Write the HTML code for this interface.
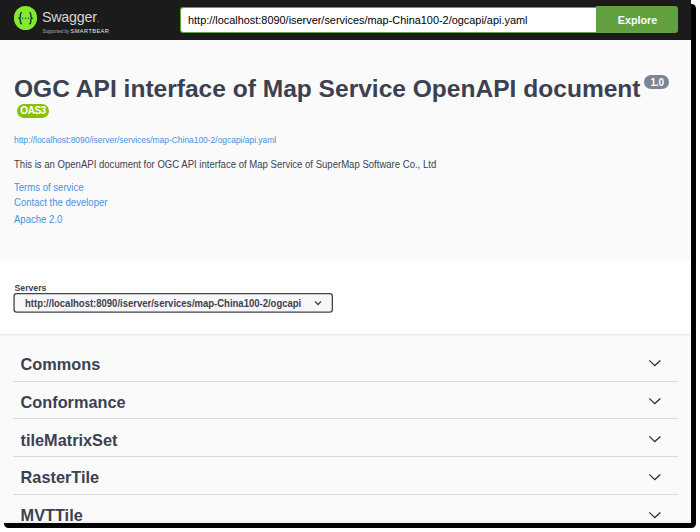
<!DOCTYPE html>
<html><head><meta charset="utf-8">
<style>
html,body{margin:0;padding:0;}
body{width:700px;height:532px;overflow:hidden;background:#fff;position:relative;font-family:"Liberation Sans",sans-serif;}
.shadow{position:absolute;left:4px;top:4px;width:692px;height:524px;background:#000;border-radius:4.5px;}
.page{position:absolute;left:0;top:0;width:691px;height:523px;background:#fafafa;overflow:hidden;}
.abs{position:absolute;white-space:nowrap;line-height:1;}
.topbar{position:absolute;left:0;top:0;width:691px;height:40px;background:#1b1b1b;}
.logo{position:absolute;left:13.9px;top:6.2px;width:23.6px;height:23.6px;border-radius:50%;background:#85ea2d;}
.sw{color:#d6d6d6;font-size:14.3px;left:42px;top:10.2px;letter-spacing:-0.25px;}
.sup{color:#b0b0b0;font-size:4.5px;left:42.5px;top:28.5px;}
.sup b{color:#e8e8e8;font-weight:normal;font-size:5.6px;letter-spacing:0.45px;}
.input{position:absolute;left:180px;top:6.5px;width:415px;height:24px;border:1px solid #62a03f;border-right:none;border-radius:3px 0 0 3px;background:#fff;}
.inputtxt{color:#000;font-size:10.92px;left:188px;top:15px;}
.btn{position:absolute;left:596px;top:6px;width:82px;height:27px;background:#62a03f;border-radius:0 3px 3px 0;}
.btntxt{color:#fff;font-weight:bold;font-size:10.75px;left:617.8px;top:14.8px;}
.title{color:#3b4151;font-weight:bold;font-size:24.55px;left:14px;top:77px;}
.ver{position:absolute;left:644.4px;top:75px;width:24.5px;height:13.8px;border-radius:7px;background:#7d8492;}
.vertxt{color:#fff;font-weight:bold;font-size:10px;letter-spacing:-0.2px;left:650.5px;top:78px;}
.oas{position:absolute;left:17.1px;top:104px;width:31.5px;height:13.6px;border-radius:7px;background:#89bf04;}
.oastxt{color:#fff;font-weight:bold;font-size:10px;letter-spacing:-0.45px;left:20.3px;top:106px;}
.link{color:#4990e2;}
.url{font-size:8.43px;left:14px;top:135.6px;}
.desc{color:#3b4151;font-size:10.5px;left:14px;top:159.2px;transform:scaleX(0.91);transform-origin:0 0;}
.l1{font-size:10.5px;left:13.6px;top:181.5px;transform:scaleX(0.91);transform-origin:0 0;}
.l2{font-size:10.5px;left:13.6px;top:197.4px;transform:scaleX(0.91);transform-origin:0 0;}
.l3{font-size:10.5px;left:13.6px;top:214.1px;transform:scaleX(0.91);transform-origin:0 0;}
.servers{position:absolute;left:0;top:259px;width:691px;height:75px;background:#fff;box-shadow:0 1px 2px rgba(0,0,0,.1);}
.srvlbl{color:#3b4151;font-weight:bold;font-size:8.7px;left:14.5px;top:283.7px;}
.seltxt{color:#3b4151;font-weight:bold;font-size:10.5px;left:25px;top:297.7px;transform:scaleX(0.905);transform-origin:0 0;}
.row{position:absolute;left:13.3px;width:664.5px;height:1px;background:#d9dadd;}
.tag{color:#3b4151;font-weight:bold;font-size:16.3px;left:20.6px;}
svg.chev{position:absolute;}
</style></head><body>
<div class="shadow"></div>
<div class="page">
  <div class="topbar">
    <div class="logo">
      <svg width="23.6" height="23.6" viewBox="0 0 23.6 23.6" style="position:absolute;left:0;top:0">
        <path d="M8.0 6.6 C6.7 6.6 6.4 7.3 6.4 8.4 L6.4 10.6 C6.4 11.5 5.7 12.0 4.6 12.2 C5.7 12.4 6.4 12.9 6.4 13.8 L6.4 16.0 C6.4 17.1 6.7 17.8 8.0 17.8" fill="none" stroke="#173647" stroke-width="1.4"/>
        <path d="M15.2 6.6 C16.5 6.6 16.8 7.3 16.8 8.4 L16.8 10.6 C16.8 11.5 17.5 12.0 18.6 12.2 C17.5 12.4 16.8 12.9 16.8 13.8 L16.8 16.0 C16.8 17.1 16.5 17.8 15.2 17.8" fill="none" stroke="#173647" stroke-width="1.4"/>
        <circle cx="8.6" cy="12.2" r="0.7" fill="#173647"/>
        <circle cx="11.6" cy="12.2" r="0.7" fill="#173647"/>
        <circle cx="14.6" cy="12.2" r="0.7" fill="#173647"/>
      </svg>
    </div>
    <div class="abs sw">Swagger</div>
    <div style="position:absolute;left:96.8px;top:21px;width:2px;height:1px;background:#5a5a5a"></div>
    <div class="abs sup">Supported by <b>SMARTBEAR</b></div>
    <div class="input"></div>
    <div class="abs inputtxt">http://localhost:8090/iserver/services/map-China100-2/ogcapi/api.yaml</div>
    <div class="btn"></div>
    <div class="abs btntxt">Explore</div>
  </div>
  <div class="abs title">OGC API interface of Map Service OpenAPI document</div>
  <div class="ver"></div>
  <div class="abs vertxt">1.0</div>
  <div class="oas"></div>
  <div class="abs oastxt">OAS3</div>
  <div class="abs link url">http://localhost:8090/iserver/services/map-China100-2/ogcapi/api.yaml</div>
  <div class="abs desc">This is an OpenAPI document for OGC API interface of Map Service of SuperMap Software Co., Ltd</div>
  <div class="abs link l1">Terms of service</div>
  <div class="abs link l2">Contact the developer</div>
  <div class="abs link l3">Apache 2.0</div>
  <div class="servers"></div>
  <div class="abs srvlbl">Servers</div>
  <svg style="position:absolute;left:0;top:0" width="691" height="330"><rect x="14.05" y="294.3" width="318.3" height="18.5" rx="2.6" fill="rgba(0,0,0,0.06)"/><rect x="14.05" y="293.55" width="318.3" height="18.5" rx="2.6" fill="#f7f7f7" stroke="#41444e" stroke-width="1.3"/></svg>
  <div class="abs seltxt">http://localhost:8090/iserver/services/map-China100-2/ogcapi</div>
  <svg class="chev" style="left:314px;top:300px" width="8" height="6" viewBox="0 0 8 6"><path d="M1 1.5 L4 4.5 L7 1.5" fill="none" stroke="#3b4151" stroke-width="1.3"/></svg>

  <div class="abs tag" style="top:356px">Commons</div>
  <svg class="chev" style="left:648px;top:358px" width="14" height="10" viewBox="0 0 14 10"><path d="M1.3 2.4 L6.8 7.6 L12.4 2.4" fill="none" stroke="#303030" stroke-width="1.3"/></svg>
  <div class="row" style="top:381px"></div>
  <div class="abs tag" style="top:393.6px">Conformance</div>
  <svg class="chev" style="left:648px;top:396px" width="14" height="10" viewBox="0 0 14 10"><path d="M1.3 2.4 L6.8 7.6 L12.4 2.4" fill="none" stroke="#303030" stroke-width="1.3"/></svg>
  <div class="row" style="top:418px"></div>
  <div class="abs tag" style="top:431.5px">tileMatrixSet</div>
  <svg class="chev" style="left:648px;top:434px" width="14" height="10" viewBox="0 0 14 10"><path d="M1.3 2.4 L6.8 7.6 L12.4 2.4" fill="none" stroke="#303030" stroke-width="1.3"/></svg>
  <div class="row" style="top:456px"></div>
  <div class="abs tag" style="top:469.1px">RasterTile</div>
  <svg class="chev" style="left:648px;top:472px" width="14" height="10" viewBox="0 0 14 10"><path d="M1.3 2.4 L6.8 7.6 L12.4 2.4" fill="none" stroke="#303030" stroke-width="1.3"/></svg>
  <div class="row" style="top:494px"></div>
  <div class="abs tag" style="top:507.1px">MVTTile</div>
  <svg class="chev" style="left:648px;top:510px" width="14" height="10" viewBox="0 0 14 10"><path d="M1.3 2.4 L6.8 7.6 L12.4 2.4" fill="none" stroke="#303030" stroke-width="1.3"/></svg>
  <div style="position:absolute;left:0;top:521px;width:691px;height:1px;background:#ececec"></div>
  <div style="position:absolute;left:0;top:522px;width:691px;height:1px;background:#f6f6f6"></div>
</div>
</body></html>
